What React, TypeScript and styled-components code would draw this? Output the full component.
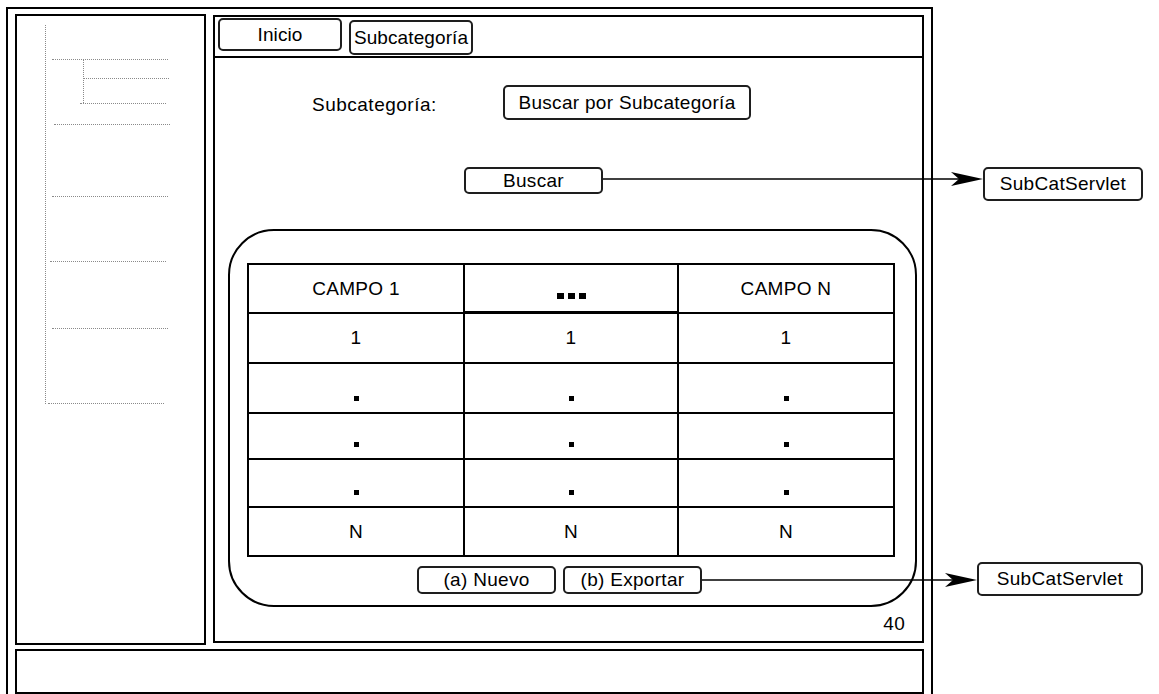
import React from "react";
import styled, { createGlobalStyle } from "styled-components";

const GlobalStyle = createGlobalStyle`
  html, body { margin: 0; padding: 0; background: #fff; }
  body { font-family: "Liberation Sans", Arial, Helvetica, sans-serif; color: #000; letter-spacing: 0.3px; }
  * { box-sizing: border-box; }
`;

const Page = styled.div`
  position: relative;
  width: 1159px;
  height: 694px;
  overflow: hidden;
  display: flex;
  align-items: flex-start;
  background: #fff;
`;

const Frame = styled.div`
  flex-shrink: 0;
  margin: 7px 0 0 6px;
  width: 927px;
  height: 700px;
  border: 2px solid #000;
  padding: 5px 7px 0 7px;
  display: flex;
  flex-direction: column;
`;

const TopRow = styled.div`
  display: flex;
  gap: 7px;
  align-items: flex-start;
`;

const Sidebar = styled.div`
  width: 191px;
  height: 631px;
  border: 2px solid #000;
  padding-top: 9px;
`;

const Tree = styled.div`
  margin-left: 28px;
  height: 379px;
  border-left: 1px dotted #8a8a8a;
  display: flex;
  flex-direction: column;
  align-items: flex-start;
`;

const TreeLine = styled.div<{ $mt: number; $ml: number; $w: number }>`
  margin-top: ${(p) => p.$mt}px;
  margin-left: ${(p) => p.$ml}px;
  width: ${(p) => p.$w}px;
  height: 0;
  border-top: 1px dotted #8a8a8a;
`;

const SubBranch = styled.div`
  margin-top: -1px;
  margin-left: 37px;
  height: 44px;
  padding-top: 19px;
  border-left: 1px dotted #8a8a8a;
`;

const Main = styled.div`
  width: 711px;
  height: 628px;
  margin-top: 1px;
  border: 2px solid #000;
  display: flex;
  flex-direction: column;
`;

const TabBar = styled.div`
  height: 41px;
  border-bottom: 2px solid #000;
  display: flex;
  gap: 7px;
  padding-left: 3px;
  align-items: flex-start;
`;

const Tab = styled.div<{ $h: number; $mt: number }>`
  width: 124px;
  height: ${(p) => p.$h}px;
  margin-top: ${(p) => p.$mt}px;
  border: 2px solid #1e1e1e;
  border-radius: 5px;
  display: flex;
  align-items: center;
  justify-content: center;
  font-size: 19px;
  white-space: nowrap;
  letter-spacing: 0.1px;
`;

const FormRow = styled.div`
  margin-top: 27px;
  padding-left: 97px;
  display: flex;
  align-items: center;
`;

const Label = styled.div`
  width: 191px;
  padding-top: 4px;
  font-size: 19px;
  letter-spacing: 0.5px;
`;

const Box = styled.div<{ $w: number; $h: number }>`
  width: ${(p) => p.$w}px;
  height: ${(p) => p.$h}px;
  border: 2px solid #1e1e1e;
  border-radius: 5px;
  display: flex;
  align-items: center;
  justify-content: center;
  font-size: 19px;
  white-space: nowrap;
  background: #fff;
`;

const ButtonRow = styled.div<{ $mt: number; $pl: number }>`
  margin-top: ${(p) => p.$mt}px;
  padding-left: ${(p) => p.$pl}px;
  display: flex;
  gap: 7px;
`;

const RoundBox = styled.div`
  margin: 35px 0 0 13px;
  width: 689px;
  height: 378px;
  border: 2px solid #000;
  border-radius: 46px;
  padding: 32px 0 0 17px;
`;

const Table = styled.div`
  display: grid;
  grid-template-columns: 216px 214px 216px;
  grid-template-rows: 49px 50px 50px 46px 48px 49px;
  width: 648px;
  border-left: 2px solid #000;
  border-top: 2px solid #000;
`;

const Cell = styled.div<{ $bottom?: boolean; $pb?: number; $thick?: boolean }>`
  border-right: 2px solid #000;
  border-bottom: ${(p) => (p.$thick ? 3 : 2)}px solid #000;
  display: flex;
  justify-content: center;
  align-items: ${(p) => (p.$bottom ? "flex-end" : "center")};
  padding-bottom: ${(p) => p.$pb ?? 0}px;
  font-size: 19px;
`;

const Dot = styled.span`
  display: block;
  width: 5px;
  height: 5px;
  background: #000;
`;

const Ellipsis = styled.div`
  display: flex;
  gap: 4px;
`;

const BigDot = styled.span`
  display: block;
  width: 7px;
  height: 6px;
  background: #000;
`;

const PageNum = styled.div`
  align-self: flex-end;
  margin: 6px 17px 0 0;
  font-size: 19px;
  line-height: 22px;
`;

const Footer = styled.div`
  margin-top: 4px;
  height: 45px;
  border: 2px solid #000;
`;

const SideColumn = styled.div`
  flex: 1;
  display: flex;
  flex-direction: column;
  align-items: flex-end;
  padding-right: 16px;
`;

const ServletBox = styled(Box)<{ $mt: number }>`
  margin-top: ${(p) => p.$mt}px;
`;

const Connectors = styled.svg`
  position: absolute;
  left: 0;
  top: 0;
  pointer-events: none;
`;

const rows = [
  ["1", "1", "1"],
  ["dot", "dot", "dot"],
  ["dot", "dot", "dot"],
  ["dot", "dot", "dot"],
  ["N", "N", "N"],
];

export default function App() {
  return (
    <>
      <GlobalStyle />
      <Page>
        <Frame>
          <TopRow>
            <Sidebar>
              <Tree>
                <TreeLine $mt={34} $ml={6} $w={116} />
                <SubBranch>
                  <TreeLine $mt={0} $ml={0} $w={85} />
                </SubBranch>
                <TreeLine $mt={0} $ml={34} $w={86} />
                <TreeLine $mt={20} $ml={8} $w={116} />
                <TreeLine $mt={71} $ml={6} $w={116} />
                <TreeLine $mt={64} $ml={4} $w={116} />
                <TreeLine $mt={66} $ml={6} $w={116} />
                <TreeLine $mt={74} $ml={2} $w={116} />
              </Tree>
            </Sidebar>
            <Main>
              <TabBar>
                <Tab $h={33} $mt={1}>Inicio</Tab>
                <Tab $h={35} $mt={3}>Subcategoría</Tab>
              </TabBar>
              <FormRow>
                <Label>Subcategoría:</Label>
                <Box $w={248} $h={35}>Buscar por Subcategoría</Box>
              </FormRow>
              <ButtonRow $mt={47} $pl={249}>
                <Box $w={139} $h={27}>Buscar</Box>
              </ButtonRow>
              <RoundBox>
                <Table>
                  <Cell>CAMPO 1</Cell>
                  <Cell $bottom $pb={12} $thick>
                    <Ellipsis>
                      <BigDot />
                      <BigDot />
                      <BigDot />
                    </Ellipsis>
                  </Cell>
                  <Cell>CAMPO N</Cell>
                  {rows.map((r, i) =>
                    r.map((v, j) =>
                      v === "dot" ? (
                        <Cell key={`${i}-${j}`} $bottom $pb={11}>
                          <Dot />
                        </Cell>
                      ) : (
                        <Cell key={`${i}-${j}`}>{v}</Cell>
                      )
                    )
                  )}
                </Table>
                <ButtonRow $mt={9} $pl={170}>
                  <Box $w={139} $h={28}>(a) Nuevo</Box>
                  <Box $w={139} $h={28}>(b) Exportar</Box>
                </ButtonRow>
              </RoundBox>
              <PageNum>40</PageNum>
            </Main>
          </TopRow>
          <Footer />
        </Frame>
        <SideColumn>
          <ServletBox $mt={167} $w={160} $h={34}>SubCatServlet</ServletBox>
          <ServletBox $mt={361} $w={166} $h={34}>SubCatServlet</ServletBox>
        </SideColumn>
        <Connectors width={1159} height={694} viewBox="0 0 1159 694">
          <line x1={603} y1={179} x2={960} y2={179} stroke="#000" strokeWidth={1.5} />
          <path d="M983 179 L951 172 L959 179 L951 186 Z" fill="#000" />
          <line x1={702} y1={580} x2={955} y2={580} stroke="#000" strokeWidth={1.5} />
          <path d="M977 580 L945 573 L953 580 L945 587 Z" fill="#000" />
        </Connectors>
      </Page>
    </>
  );
}
